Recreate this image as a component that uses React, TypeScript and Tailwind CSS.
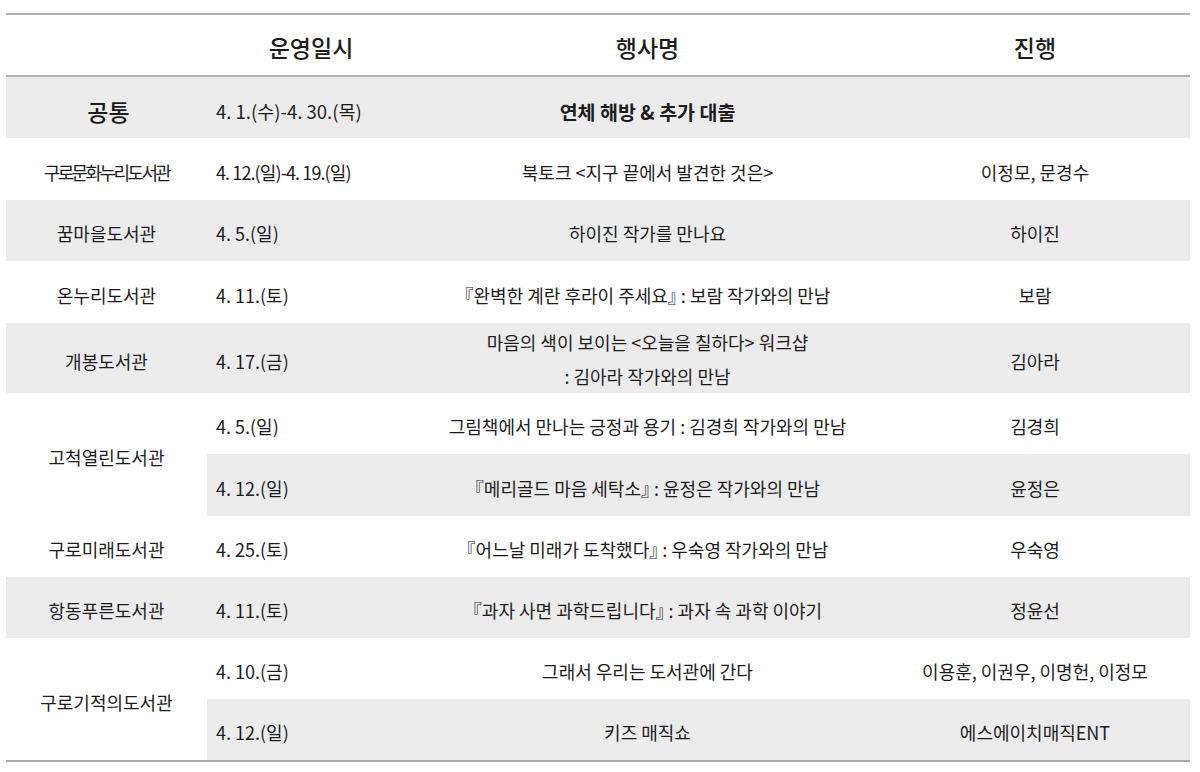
import React from 'react';

type Row = {
  place?: string;
  span?: number;
  date: string;
  event: React.ReactNode;
  host: string;
  gray: boolean;
  h: string;
  squeeze?: boolean;
};

const rows: Row[] = [
  { place: '구로문화누리도서관', date: '4. 12.(일)-4. 19.(일)', event: '북토크 <지구 끝에서 발견한 것은>', host: '이정모, 문경수', gray: false, h: 'h-[62px]', squeeze: true },
  { place: '꿈마을도서관', date: '4. 5.(일)', event: '하이진 작가를 만나요', host: '하이진', gray: true, h: 'h-[61px]' },
  { place: '온누리도서관', date: '4. 11.(토)', event: '『완벽한 계란 후라이 주세요』 : 보람 작가와의 만남', host: '보람', gray: false, h: 'h-[62px]' },
  {
    place: '개봉도서관',
    date: '4. 17.(금)',
    event: (
      <span className="block leading-[34px] -mt-[4px]">
        마음의 색이 보이는 &lt;오늘을 칠하다&gt; 워크샵
        <br />: 김아라 작가와의 만남
      </span>
    ),
    host: '김아라',
    gray: true,
    h: 'h-[70px]',
  },
  { place: '고척열린도서관', span: 2, date: '4. 5.(일)', event: '그림책에서 만나는 긍정과 용기 : 김경희 작가와의 만남', host: '김경희', gray: false, h: 'h-[61px]' },
  { date: '4. 12.(일)', event: '『메리골드 마음 세탁소』 : 윤정은 작가와의 만남', host: '윤정은', gray: true, h: 'h-[62px]' },
  { place: '구로미래도서관', date: '4. 25.(토)', event: '『어느날 미래가 도착했다』 : 우숙영 작가와의 만남', host: '우숙영', gray: false, h: 'h-[61px]' },
  { place: '항동푸른도서관', date: '4. 11.(토)', event: '『과자 사면 과학드립니다』 : 과자 속 과학 이야기', host: '정윤선', gray: true, h: 'h-[61px]' },
  { place: '구로기적의도서관', span: 2, date: '4. 10.(금)', event: '그래서 우리는 도서관에 간다', host: '이용훈, 이권우, 이명헌, 이정모', gray: false, h: 'h-[61px]' },
  { date: '4. 12.(일)', event: '키즈 매직쇼', host: '에스에이치매직ENT', gray: true, h: 'h-[62px]' },
];

export default function App() {
  return (
    <div className="w-[1200px] h-[772px] bg-white pt-[13px] pl-[6px] text-[#1c1c1c] font-['Noto_Sans_CJK_KR','Noto_Sans',sans-serif] [font-feature-settings:'halt']">
      <table className="w-[1184px] table-fixed border-collapse text-[18px]">
        <colgroup>
          <col className="w-[201px]" />
          <col className="w-[208px]" />
          <col className="w-[465px]" />
          <col className="w-[310px]" />
        </colgroup>
        <thead>
          <tr className="h-[62px] border-t-2 border-b-2 border-[#b3b3b3] text-[23px]">
            <th />
            <th className="font-medium text-center pt-[4px]">운영일시</th>
            <th className="font-medium text-center pt-[4px]">행사명</th>
            <th className="font-medium text-center pt-[4px]">진행</th>
          </tr>
        </thead>
        <tbody className="border-b-2 border-[#a8a8a8]">
          <tr className="h-[62px] bg-[#ececec]">
            <td className="text-center text-[23px] font-medium pl-[4px] pt-[8px]">공통</td>
            <td className="pl-[9px] pt-[8px] text-[18.5px]">4. 1.(수)-4. 30.(목)</td>
            <td className="text-center font-bold text-[19.5px] pt-[8px]">연체 해방 &amp; 추가 대출</td>
            <td />
          </tr>
          {rows.map((r, i) => (
            <tr key={i} className={r.h}>
              {r.place && (
                <td
                  rowSpan={r.span ?? 1}
                  className={`text-center px-0 pt-[6px] ${r.gray ? 'bg-[#ececec]' : 'bg-white'} ${r.squeeze ? 'tracking-[-2.6px]' : ''}`}
                >
                  {r.place}
                </td>
              )}
              <td className={`pl-[9px] pt-[6px] ${r.gray ? 'bg-[#ececec]' : ''} ${r.squeeze ? 'tracking-[-0.9px]' : ''}`}>{r.date}</td>
              <td className={`text-center px-0 pt-[6px] ${r.gray ? 'bg-[#ececec]' : ''}`}>{r.event}</td>
              <td className={`text-center px-0 pt-[6px] ${r.gray ? 'bg-[#ececec]' : ''}`}>{r.host}</td>
            </tr>
          ))}
        </tbody>
      </table>
    </div>
  );
}
